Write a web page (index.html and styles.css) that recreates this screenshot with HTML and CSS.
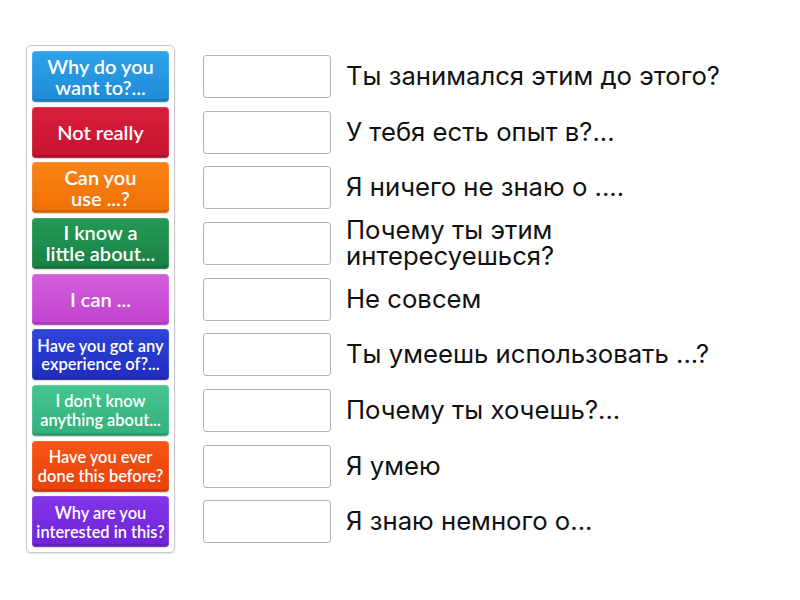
FILE: index.html
```html
<!DOCTYPE html>
<html lang="ru">
<head>
  <meta charset="UTF-8">
  <title>Match up</title>
  <link rel="stylesheet" href="styles.css">
</head>
<body>

<div class="game">
  <div class="tiles">
    <div class="tile blue">Why do you<br>want to?...</div>
    <div class="tile red">Not really</div>
    <div class="tile orange">Can you<br>use ...?</div>
    <div class="tile green">I know a<br>little about...</div>
    <div class="tile pink">I can ...</div>
    <div class="tile navy small">Have you got any<br>experience of?...</div>
    <div class="tile mint mid">I don't know<br>anything about...</div>
    <div class="tile flame mid">Have you ever<br>done this before?</div>
    <div class="tile purple mid">Why are you<br>interested in this?</div>
  </div>

  <div class="answers">
    <div class="row"><div class="slot"></div><span class="label">Ты занимался этим до этого?</span></div>
    <div class="row"><div class="slot"></div><span class="label">У тебя есть опыт в?...</span></div>
    <div class="row"><div class="slot"></div><span class="label">Я ничего не знаю о ....</span></div>
    <div class="row"><div class="slot"></div><span class="label">Почему ты этим<br>интересуешься?</span></div>
    <div class="row"><div class="slot"></div><span class="label">Не совсем</span></div>
    <div class="row"><div class="slot"></div><span class="label">Ты умеешь использовать ...?</span></div>
    <div class="row"><div class="slot"></div><span class="label">Почему ты хочешь?...</span></div>
    <div class="row"><div class="slot"></div><span class="label">Я умею</span></div>
    <div class="row"><div class="slot"></div><span class="label">Я знаю немного о...</span></div>
  </div>
</div>

</body>
</html>
```

FILE: styles.css
```css
body {
  margin: 0;
  background: #fff;
  font-family: Inter, "Noto Sans", sans-serif;
}

.game {
  display: flex;
  align-items: flex-start;
  padding: 45px 0 0 26px;
}

/* linke Spalte mit den Kärtchen */
.tiles {
  display: flex;
  flex-direction: column;
  gap: 4.67px;
  width: 137px;
  padding: 5px;
  border: 1px solid #c8c8c8;
  border-radius: 5px;
  box-shadow: 0 1px 2px rgba(0, 0, 0, 0.12);
}

.tile {
  height: 51px;
  display: flex;
  align-items: center;
  justify-content: center;
  text-align: center;
  white-space: nowrap;
  color: #fff;
  font-family: Lato, "Open Sans", sans-serif;
  font-weight: 600;
  font-size: 20px;
  line-height: 21px;
  border-radius: 4px;
  box-shadow: inset 0 0 0 1px rgba(255, 255, 255, 0.12), inset 0 -3px 0 rgba(0, 0, 0, 0.12), 0 1px 1px rgba(0, 0, 0, 0.15);
}

.tile.small {
  font-size: 16.5px;
  line-height: 18px;
}

.tile.mid {
  font-size: 16.4px;
  line-height: 19px;
}

.blue   { background: linear-gradient(#2fa3ea, #1e8ad6); }
.red    { background: linear-gradient(#da1d3c, #c4142f); }
.orange { background: linear-gradient(#fb8415, #ef6f06); }
.green  { background: linear-gradient(#239a55, #1a7f44); }
.pink   { background: linear-gradient(#d35fdc, #c142cd); }
.navy   { background: linear-gradient(#2e45d6, #1f2cbf); }
.mint   { background: linear-gradient(#45c590, #32b07c); }
.flame  { background: linear-gradient(#f85618, #e64109); }
.purple { background: linear-gradient(#8236e8, #6f22d6); }

/* rechte Spalte: Ablagefelder + Texte */
.answers {
  display: flex;
  flex-direction: column;
  margin-left: 28px;
  margin-top: 10px;
}

.row {
  height: 55.67px;
  display: flex;
  align-items: flex-start;
  gap: 15px;
}

.slot {
  width: 126px;
  height: 41px;
  flex-shrink: 0;
  border: 1px solid #b4b4b4;
  border-radius: 3px;
  background: #fff;
}

.label {
  margin-top: 21px;
  transform: translateY(-50%);
  white-space: nowrap;
  font-size: 25.7px;
  line-height: 26px;
  color: #111;
}
```
